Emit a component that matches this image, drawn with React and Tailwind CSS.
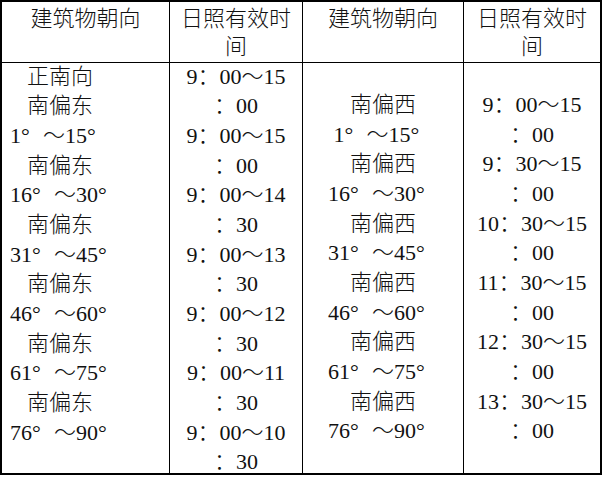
import React from "react";

function Deg({ a, b }) {
  return (
    <>
      {a}
      <span className="inline-block w-[1em] text-left">°</span>～{b}
      <span className="inline-block w-[1em] text-left">°</span>
    </>
  );
}

function Line({ children, className = "" }) {
  return (
    <div className={"h-[29.7px] leading-[29.7px] whitespace-nowrap " + className}>
      {children}
    </div>
  );
}

const col1 = [
  ["c", "正南向"],
  ["c", "南偏东"],
  ["d", "1", "15"],
  ["c", "南偏东"],
  ["d", "16", "30"],
  ["c", "南偏东"],
  ["d", "31", "45"],
  ["c", "南偏东"],
  ["d", "46", "60"],
  ["c", "南偏东"],
  ["d", "61", "75"],
  ["c", "南偏东"],
  ["d", "76", "90"],
];

const col2 = [
  "9：00～15",
  "：00",
  "9：00～15",
  "：00",
  "9：00～14",
  "：30",
  "9：00～13",
  "：30",
  "9：00～12",
  "：30",
  "9：00～11",
  "：30",
  "9：00～10",
  "：30",
];

const col3 = [
  ["c", "南偏西"],
  ["d", "1", "15"],
  ["c", "南偏西"],
  ["d", "16", "30"],
  ["c", "南偏西"],
  ["d", "31", "45"],
  ["c", "南偏西"],
  ["d", "46", "60"],
  ["c", "南偏西"],
  ["d", "61", "75"],
  ["c", "南偏西"],
  ["d", "76", "90"],
];

const col4 = [
  "9：00～15",
  "：00",
  "9：30～15",
  "：00",
  "10：30～15",
  "：00",
  "11：30～15",
  "：00",
  "12：30～15",
  "：00",
  "13：30～15",
  "：00",
];

export default function App() {
  return (
    <div className="bg-white w-[604px] h-[478px]">
      <div className="w-[602px] h-[475px] border-2 border-black grid grid-cols-[167px_133px_161px_137px] grid-rows-[60px_411px] text-[22px] text-[#111] font-light font-['Liberation_Serif','Noto_Sans_CJK_SC',serif]">
        {/* header */}
        <div className="text-center pt-[3px] leading-[28px]">建筑物朝向</div>
        <div className="border-l border-black text-center pt-[3px] leading-[28px]">
          <div>日照有效时</div>
          <div>间</div>
        </div>
        <div className="border-l border-black text-center pt-[3px] leading-[28px]">建筑物朝向</div>
        <div className="border-l border-black text-center pt-[3px] leading-[28px]">
          <div>日照有效时</div>
          <div>间</div>
        </div>

        {/* body */}
        <div className="border-t border-black">
          <div className="mt-[-1.5px]">
            {col1.map((l, i) =>
              l[0] === "c" ? (
                <Line key={i} className="pl-[25px]">{l[1]}</Line>
              ) : (
                <Line key={i} className="pl-[8px]">
                  <Deg a={l[1]} b={l[2]} />
                </Line>
              )
            )}
          </div>
        </div>
        <div className="border-t border-l border-black">
          <div className="mt-[-1.5px] text-center">
            {col2.map((t, i) => (
              <Line key={i}>{t}</Line>
            ))}
          </div>
        </div>
        <div className="border-t border-l border-black flex flex-col justify-center text-center">
          {col3.map((l, i) =>
            l[0] === "c" ? (
              <Line key={i}>{l[1]}</Line>
            ) : (
              <Line key={i}>
                <Deg a={l[1]} b={l[2]} />
              </Line>
            )
          )}
        </div>
        <div className="border-t border-l border-black flex flex-col justify-center text-center">
          {col4.map((t, i) => (
            <Line key={i}>{t}</Line>
          ))}
        </div>
      </div>
    </div>
  );
}
